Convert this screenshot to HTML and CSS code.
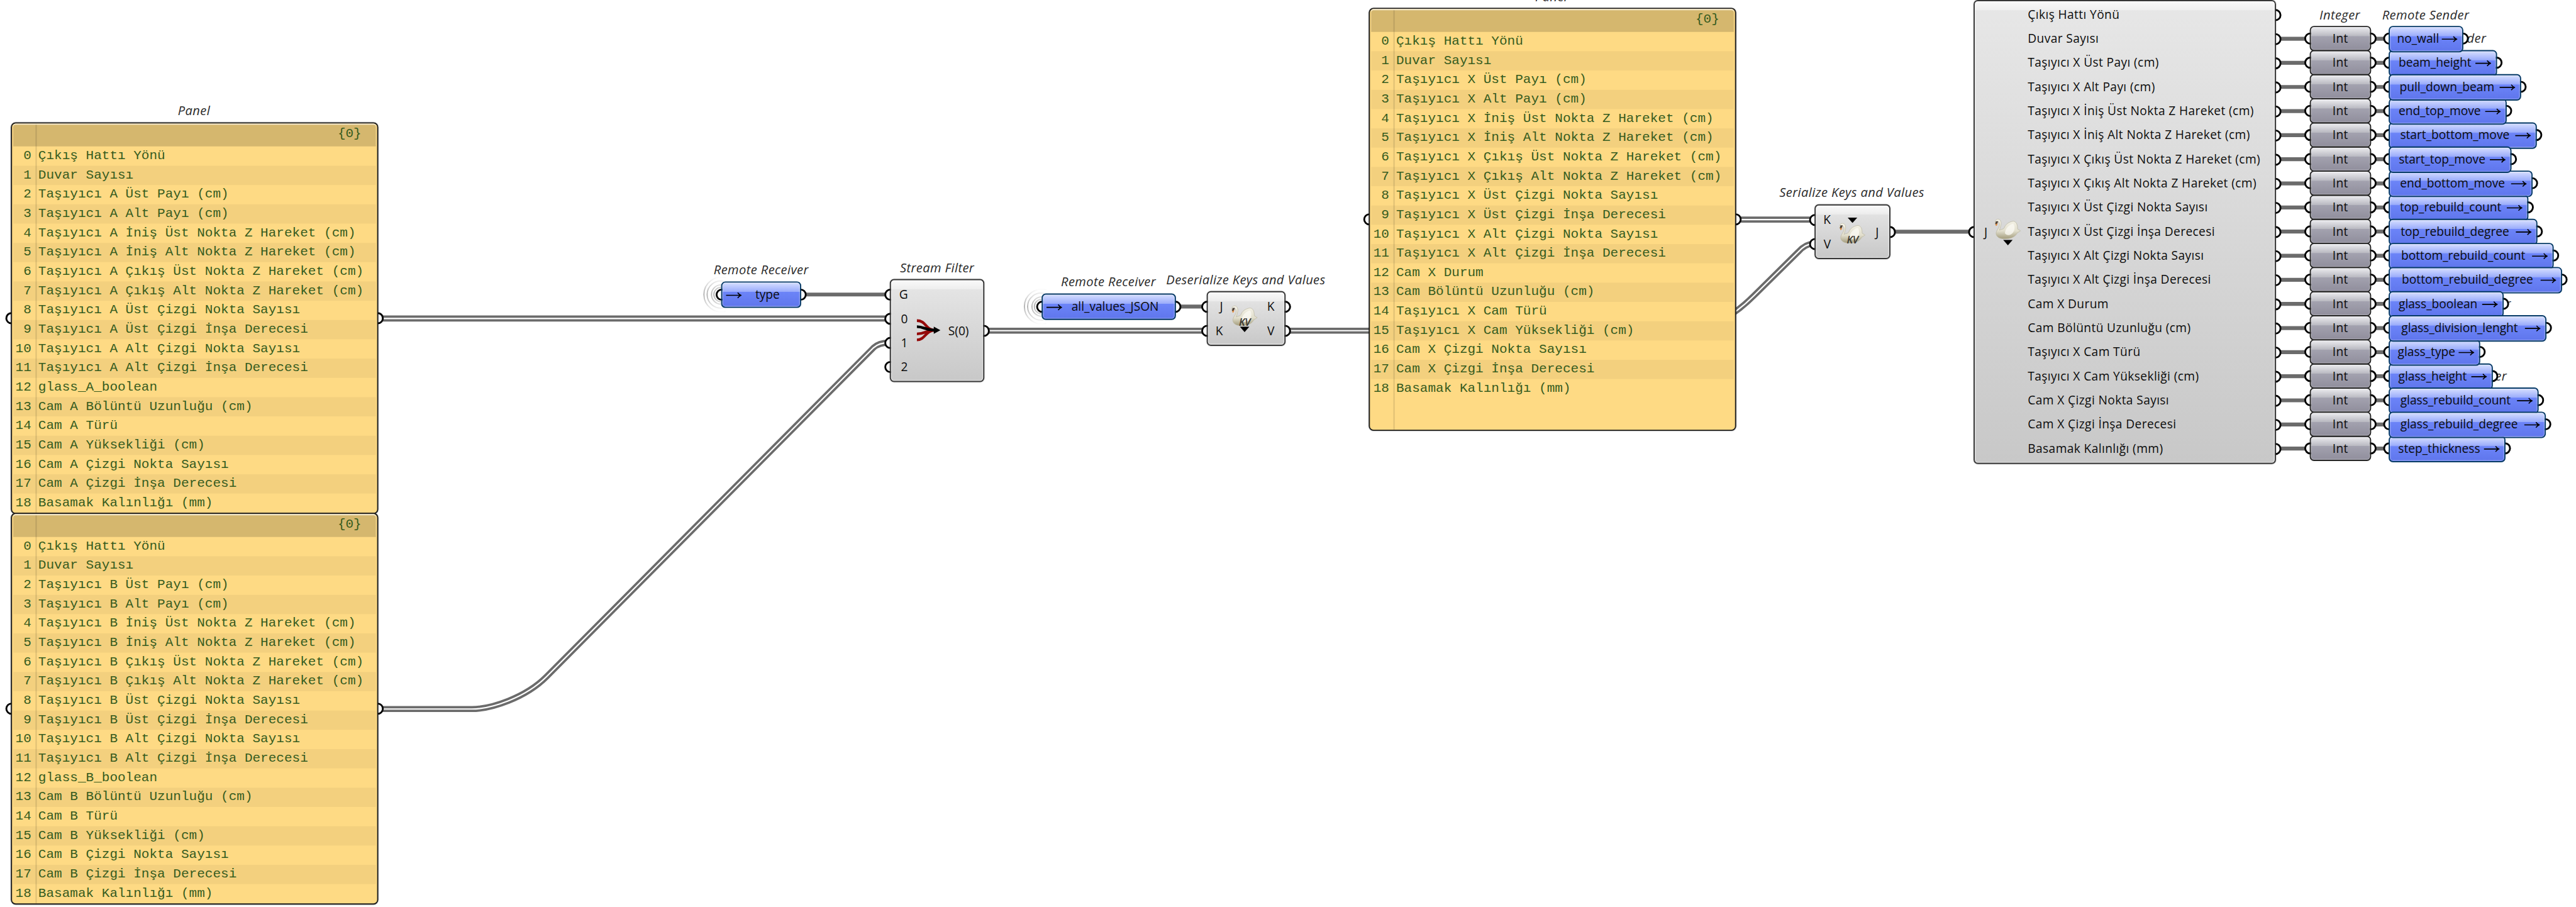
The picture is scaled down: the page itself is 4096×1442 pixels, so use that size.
FILE: index.html
```html
<!DOCTYPE html>
<html lang="tr">
<head>
<meta charset="utf-8">
<title>Node canvas</title>
<link rel="stylesheet" href="styles.css">
</head>
<body>
<main class="canvas">

<svg class="wires" width="4276" height="1505" viewBox="0 0 4276 1505">
  <defs>
    <linearGradient id="fade" gradientUnits="userSpaceOnUse" x1="0" y1="-30" x2="0" y2="30">
      <stop offset="0" stop-color="#999" stop-opacity="0"/>
      <stop offset=".5" stop-color="#999" stop-opacity=".75"/>
      <stop offset="1" stop-color="#999" stop-opacity="0"/>
    </linearGradient>
    <linearGradient id="feather" x1="0" y1="0" x2="0" y2="1">
      <stop offset="0" stop-color="#f6f4ea"/>
      <stop offset=".6" stop-color="#e2dfce"/>
      <stop offset="1" stop-color="#a39c7c"/>
    </linearGradient>
    <g id="waves" fill="none" stroke="url(#fade)" stroke-width="2">
      <path d="M8 -28A29 29 0 1 0 8 28"/>
      <path d="M4 -22A22.500 22.500 0 1 0 4 22"/>
      <path d="M0 -16A16 16 0 1 0 0 16"/>
      <path d="M0 -12A12 12 0 1 0 0 12"/>
    </g>
    <symbol id="swan" viewBox="0 0 43 35">
      <path d="M3 27C1 22 5 18 7 14C9 10 8 5 5 5C3 5 3 7 3 10C1 10 0 7 1 4C2 0 8 -1 10 4C12 9 9 15 8 19C11 17 14 18 16 15C18 9 24 5 31 4C37 5 38 11 38 17L43 20L37 24C35 29 28 33 20 33C12 34 5 32 3 27Z" fill="url(#feather)" stroke="#b9b49c" stroke-width=".7"/>
      <path d="M17 24C18 15 24 10 31 8C35 14 33 22 27 26C23 28 19 27 17 24Z" fill="#faf9f2" opacity=".8"/>
      <path d="M1 7L5 6L4 11L2 12Z" fill="#e08a3c"/>
      <path d="M2 4L6 4L4 8L1 9Z" fill="#4a4038"/>
    </symbol>
  </defs>
  <use href="#waves" x="1197" y="488.700"/>
  <use href="#waves" x="1729" y="508.700"/>
  <g class="wire">
    <path d="M1332 488.700H1475M1954 508.700H2001M3140 384.500H3274"/>
    <path d="M3780 64.300H3964M3780 104.300H3964M3780 144.300H3964M3780 184.300H3964M3780 224.300H3964M3780 264.300H3964M3780 304.300H3964M3780 344.300H3964M3780 384.300H3964M3780 424.300H3964M3780 464.300H3964M3780 504.300H3964M3780 544.300H3964M3780 584.300H3964M3780 624.300H3964M3780 664.300H3964M3780 704.300H3964M3780 744.300H3964"/>
  </g>
  <g class="wire-list">
    <path d="M630 528.500H1475M630 1176.500H783C815 1176.500 872 1158 907 1123L1450 577Q1459 568.700 1475 568.700M1636 548.700H2001M2136 548.700H2790C2835 548.700 2875 527 2911 491L2985 418Q2997 404.500 3010 404.500M2884 364.400H3010"/>
  </g>
  <g class="wire-core">
    <path d="M630 528.500H1475M630 1176.500H783C815 1176.500 872 1158 907 1123L1450 577Q1459 568.700 1475 568.700M1636 548.700H2001M2136 548.700H2790C2835 548.700 2875 527 2911 491L2985 418Q2997 404.500 3010 404.500M2884 364.400H3010"/>
  </g>
</svg>

<div class="label l-panel-a">Panel</div>
<section class="node panel panel-a">
  <i class="port in"></i><i class="port out"></i>
  <div class="sheet">
    <header>{0}</header>
    <ol>
      <li><b>0</b><span>Çıkış Hattı Yönü</span></li>
      <li><b>1</b><span>Duvar Sayısı</span></li>
      <li><b>2</b><span>Taşıyıcı A Üst Payı (cm)</span></li>
      <li><b>3</b><span>Taşıyıcı A Alt Payı (cm)</span></li>
      <li><b>4</b><span>Taşıyıcı A İniş Üst Nokta Z Hareket (cm)</span></li>
      <li><b>5</b><span>Taşıyıcı A İniş Alt Nokta Z Hareket (cm)</span></li>
      <li><b>6</b><span>Taşıyıcı A Çıkış Üst Nokta Z Hareket (cm)</span></li>
      <li><b>7</b><span>Taşıyıcı A Çıkış Alt Nokta Z Hareket (cm)</span></li>
      <li><b>8</b><span>Taşıyıcı A Üst Çizgi Nokta Sayısı</span></li>
      <li><b>9</b><span>Taşıyıcı A Üst Çizgi İnşa Derecesi</span></li>
      <li><b>10</b><span>Taşıyıcı A Alt Çizgi Nokta Sayısı</span></li>
      <li><b>11</b><span>Taşıyıcı A Alt Çizgi İnşa Derecesi</span></li>
      <li><b>12</b><span>glass_A_boolean</span></li>
      <li><b>13</b><span>Cam A Bölüntü Uzunluğu (cm)</span></li>
      <li><b>14</b><span>Cam A Türü</span></li>
      <li><b>15</b><span>Cam A Yüksekliği (cm)</span></li>
      <li><b>16</b><span>Cam A Çizgi Nokta Sayısı</span></li>
      <li><b>17</b><span>Cam A Çizgi İnşa Derecesi</span></li>
      <li><b>18</b><span>Basamak Kalınlığı (mm)</span></li>
    </ol>
  </div>
</section>

<section class="node panel panel-b">
  <i class="port in"></i><i class="port out"></i>
  <div class="sheet">
    <header>{0}</header>
    <ol>
      <li><b>0</b><span>Çıkış Hattı Yönü</span></li>
      <li><b>1</b><span>Duvar Sayısı</span></li>
      <li><b>2</b><span>Taşıyıcı B Üst Payı (cm)</span></li>
      <li><b>3</b><span>Taşıyıcı B Alt Payı (cm)</span></li>
      <li><b>4</b><span>Taşıyıcı B İniş Üst Nokta Z Hareket (cm)</span></li>
      <li><b>5</b><span>Taşıyıcı B İniş Alt Nokta Z Hareket (cm)</span></li>
      <li><b>6</b><span>Taşıyıcı B Çıkış Üst Nokta Z Hareket (cm)</span></li>
      <li><b>7</b><span>Taşıyıcı B Çıkış Alt Nokta Z Hareket (cm)</span></li>
      <li><b>8</b><span>Taşıyıcı B Üst Çizgi Nokta Sayısı</span></li>
      <li><b>9</b><span>Taşıyıcı B Üst Çizgi İnşa Derecesi</span></li>
      <li><b>10</b><span>Taşıyıcı B Alt Çizgi Nokta Sayısı</span></li>
      <li><b>11</b><span>Taşıyıcı B Alt Çizgi İnşa Derecesi</span></li>
      <li><b>12</b><span>glass_B_boolean</span></li>
      <li><b>13</b><span>Cam B Bölüntü Uzunluğu (cm)</span></li>
      <li><b>14</b><span>Cam B Türü</span></li>
      <li><b>15</b><span>Cam B Yüksekliği (cm)</span></li>
      <li><b>16</b><span>Cam B Çizgi Nokta Sayısı</span></li>
      <li><b>17</b><span>Cam B Çizgi İnşa Derecesi</span></li>
      <li><b>18</b><span>Basamak Kalınlığı (mm)</span></li>
    </ol>
  </div>
</section>

<div class="label l-type">Remote Receiver</div>
<section class="node receiver r-type">
  <i class="port in"></i><i class="port out"></i>
  <div class="pill"><svg class="arrow" viewBox="0 0 26 12"><use href="#arrow"/></svg><span>type</span></div>
</section>

<div class="label l-filter">Stream Filter</div>
<section class="node filter">
  <div class="shell">
    <div class="params">
      <p><i class="port in"></i>G</p><p><i class="port in"></i>0</p><p><i class="port in"></i>1</p><p><i class="port in"></i>2</p>
    </div>
    <svg class="merge" width="42" height="42" viewBox="0 0 42 42">
      <g fill="none" stroke-width="4.500">
        <path d="M2 4C18 4 16 20 32 20M2 26C16 26 18 20 30 20M2 36C16 36 16 20 32 20" stroke="#940a0a"/>
        <path d="M2 14C14 14 16 20 32 20" stroke="#000"/>
      </g>
      <path d="M30 14L41 20L30 26Z"/>
    </svg>
    <div class="params"><p><i class="port out"></i>S(0)</p></div>
  </div>
</section>

<div class="label l-json">Remote Receiver</div>
<section class="node receiver r-json">
  <i class="port in"></i><i class="port out"></i>
  <div class="pill"><svg class="arrow" viewBox="0 0 26 12"><use href="#arrow"/></svg><span>all_values_JSON</span></div>
</section>

<div class="label l-deser">Deserialize Keys and Values</div>
<section class="node kv deser">
  <div class="shell">
    <div class="params"><p><i class="port in"></i>J</p><p><i class="port in"></i>K</p></div>
    <div class="bird">
      <svg width="43" height="35"><use href="#swan"/></svg>
      <em>KV</em>
      <svg class="tri" width="16" height="9" viewBox="0 0 16 9"><path d="M0 0H16L8 9Z"/></svg>
    </div>
    <div class="params"><p><i class="port out"></i>K</p><p><i class="port out"></i>V</p></div>
  </div>
</section>

<div class="label l-panel-x">Panel</div>
<section class="node panel panel-x">
  <i class="port in"></i><i class="port out"></i>
  <div class="sheet">
    <header>{0}</header>
    <ol>
      <li><b>0</b><span>Çıkış Hattı Yönü</span></li>
      <li><b>1</b><span>Duvar Sayısı</span></li>
      <li><b>2</b><span>Taşıyıcı X Üst Payı (cm)</span></li>
      <li><b>3</b><span>Taşıyıcı X Alt Payı (cm)</span></li>
      <li><b>4</b><span>Taşıyıcı X İniş Üst Nokta Z Hareket (cm)</span></li>
      <li><b>5</b><span>Taşıyıcı X İniş Alt Nokta Z Hareket (cm)</span></li>
      <li><b>6</b><span>Taşıyıcı X Çıkış Üst Nokta Z Hareket (cm)</span></li>
      <li><b>7</b><span>Taşıyıcı X Çıkış Alt Nokta Z Hareket (cm)</span></li>
      <li><b>8</b><span>Taşıyıcı X Üst Çizgi Nokta Sayısı</span></li>
      <li><b>9</b><span>Taşıyıcı X Üst Çizgi İnşa Derecesi</span></li>
      <li><b>10</b><span>Taşıyıcı X Alt Çizgi Nokta Sayısı</span></li>
      <li><b>11</b><span>Taşıyıcı X Alt Çizgi İnşa Derecesi</span></li>
      <li><b>12</b><span>Cam X Durum</span></li>
      <li><b>13</b><span>Cam Bölüntü Uzunluğu (cm)</span></li>
      <li><b>14</b><span>Taşıyıcı X Cam Türü</span></li>
      <li><b>15</b><span>Taşıyıcı X Cam Yüksekliği (cm)</span></li>
      <li><b>16</b><span>Cam X Çizgi Nokta Sayısı</span></li>
      <li><b>17</b><span>Cam X Çizgi İnşa Derecesi</span></li>
      <li><b>18</b><span>Basamak Kalınlığı (mm)</span></li>
    </ol>
  </div>
</section>

<div class="label l-ser">Serialize Keys and Values</div>
<section class="node kv ser">
  <div class="shell">
    <div class="params"><p><i class="port in"></i>K</p><p><i class="port in"></i>V</p></div>
    <div class="bird">
      <svg class="tri" width="16" height="9" viewBox="0 0 16 9"><path d="M0 0H16L8 9Z"/></svg>
      <svg width="43" height="35"><use href="#swan"/></svg>
      <em>KV</em>
    </div>
    <div class="params"><p><i class="port out"></i>J</p></div>
  </div>
</section>

<section class="node parser">
  <div class="shell">
    <div class="params"><p><i class="port in"></i>J</p></div>
    <div class="bird">
      <svg width="43" height="35"><use href="#swan"/></svg>
      <svg class="tri" width="16" height="9" viewBox="0 0 16 9"><path d="M0 0H16L8 9Z"/></svg>
    </div>
    <div class="params fields">
      <p>Çıkış Hattı Yönü<i class="port out"></i></p>
      <p>Duvar Sayısı<i class="port out"></i></p>
      <p>Taşıyıcı X Üst Payı (cm)<i class="port out"></i></p>
      <p>Taşıyıcı X Alt Payı (cm)<i class="port out"></i></p>
      <p>Taşıyıcı X İniş Üst Nokta Z Hareket (cm)<i class="port out"></i></p>
      <p>Taşıyıcı X İniş Alt Nokta Z Hareket (cm)<i class="port out"></i></p>
      <p>Taşıyıcı X Çıkış Üst Nokta Z Hareket (cm)<i class="port out"></i></p>
      <p>Taşıyıcı X Çıkış Alt Nokta Z Hareket (cm)<i class="port out"></i></p>
      <p>Taşıyıcı X Üst Çizgi Nokta Sayısı<i class="port out"></i></p>
      <p>Taşıyıcı X Üst Çizgi İnşa Derecesi<i class="port out"></i></p>
      <p>Taşıyıcı X Alt Çizgi Nokta Sayısı<i class="port out"></i></p>
      <p>Taşıyıcı X Alt Çizgi İnşa Derecesi<i class="port out"></i></p>
      <p>Cam X Durum<i class="port out"></i></p>
      <p>Cam Bölüntü Uzunluğu (cm)<i class="port out"></i></p>
      <p>Taşıyıcı X Cam Türü<i class="port out"></i></p>
      <p>Taşıyıcı X Cam Yüksekliği (cm)<i class="port out"></i></p>
      <p>Cam X Çizgi Nokta Sayısı<i class="port out"></i></p>
      <p>Cam X Çizgi İnşa Derecesi<i class="port out"></i></p>
      <p>Basamak Kalınlığı (mm)<i class="port out"></i></p>
    </div>
  </div>
</section>

<div class="label l-int">Integer</div>
<div class="label l-s1">Remote Sender</div>
<div class="label l-s2">Remote Sender</div>
<div class="label l-s3">Remote Sender</div>
<div class="label l-s4">Remote Sender</div>

<svg class="defs" width="0" height="0"><symbol id="arrow" viewBox="0 0 26 12"><path d="M0 6H25M19.500 1.500Q22 5 25 6Q22 7 19.500 10.500" fill="none" stroke="#000" stroke-width="1.700"/></symbol></svg>

<section class="node outputs">
  <div class="row"><div class="int"><i class="port in"></i><i class="port out"></i><span>Int</span></div><div class="sender z3" style="width:124.7px"><i class="port in"></i><i class="port out"></i><div class="pill"><span>no_wall</span><svg class="arrow"><use href="#arrow"/></svg></div></div></div>
  <div class="row"><div class="int"><i class="port in"></i><i class="port out"></i><span>Int</span></div><div class="sender z1" style="width:180.7px"><i class="port in"></i><i class="port out"></i><div class="pill"><span>beam_height</span><svg class="arrow"><use href="#arrow"/></svg></div></div></div>
  <div class="row"><div class="int"><i class="port in"></i><i class="port out"></i><span>Int</span></div><div class="sender z5" style="width:220.7px"><i class="port in"></i><i class="port out"></i><div class="pill"><span>pull_down_beam</span><svg class="arrow"><use href="#arrow"/></svg></div></div></div>
  <div class="row"><div class="int"><i class="port in"></i><i class="port out"></i><span>Int</span></div><div class="sender z4" style="width:196.4px"><i class="port in"></i><i class="port out"></i><div class="pill"><span>end_top_move</span><svg class="arrow"><use href="#arrow"/></svg></div></div></div>
  <div class="row"><div class="int"><i class="port in"></i><i class="port out"></i><span>Int</span></div><div class="sender z3" style="width:246.7px"><i class="port in"></i><i class="port out"></i><div class="pill"><span>start_bottom_move</span><svg class="arrow"><use href="#arrow"/></svg></div></div></div>
  <div class="row"><div class="int"><i class="port in"></i><i class="port out"></i><span>Int</span></div><div class="sender z5" style="width:204.4px"><i class="port in"></i><i class="port out"></i><div class="pill"><span>start_top_move</span><svg class="arrow"><use href="#arrow"/></svg></div></div></div>
  <div class="row"><div class="int"><i class="port in"></i><i class="port out"></i><span>Int</span></div><div class="sender z4" style="width:239px"><i class="port in"></i><i class="port out"></i><div class="pill"><span>end_bottom_move</span><svg class="arrow"><use href="#arrow"/></svg></div></div></div>
  <div class="row"><div class="int"><i class="port in"></i><i class="port out"></i><span>Int</span></div><div class="sender z3" style="width:232.7px"><i class="port in"></i><i class="port out"></i><div class="pill"><span>top_rebuild_count</span><svg class="arrow"><use href="#arrow"/></svg></div></div></div>
  <div class="row"><div class="int"><i class="port in"></i><i class="port out"></i><span>Int</span></div><div class="sender z4" style="width:247px"><i class="port in"></i><i class="port out"></i><div class="pill"><span>top_rebuild_degree</span><svg class="arrow"><use href="#arrow"/></svg></div></div></div>
  <div class="row"><div class="int"><i class="port in"></i><i class="port out"></i><span>Int</span></div><div class="sender z5" style="width:274.7px"><i class="port in"></i><i class="port out"></i><div class="pill"><span>bottom_rebuild_count</span><svg class="arrow"><use href="#arrow"/></svg></div></div></div>
  <div class="row"><div class="int"><i class="port in"></i><i class="port out"></i><span>Int</span></div><div class="sender z6" style="width:288.7px"><i class="port in"></i><i class="port out"></i><div class="pill"><span>bottom_rebuild_degree</span><svg class="arrow"><use href="#arrow"/></svg></div></div></div>
  <div class="row"><div class="int"><i class="port in"></i><i class="port out"></i><span>Int</span></div><div class="sender z7" style="width:191px"><i class="port in"></i><i class="port out"></i><div class="pill"><span>glass_boolean</span><svg class="arrow"><use href="#arrow"/></svg></div></div></div>
  <div class="row"><div class="int"><i class="port in"></i><i class="port out"></i><span>Int</span></div><div class="sender z8" style="width:262.7px"><i class="port in"></i><i class="port out"></i><div class="pill"><span>glass_division_lenght</span><svg class="arrow"><use href="#arrow"/></svg></div></div></div>
  <div class="row"><div class="int"><i class="port in"></i><i class="port out"></i><span>Int</span></div><div class="sender z7" style="width:152.7px"><i class="port in"></i><i class="port out"></i><div class="pill"><span>glass_type</span><svg class="arrow"><use href="#arrow"/></svg></div></div></div>
  <div class="row"><div class="int"><i class="port in"></i><i class="port out"></i><span>Int</span></div><div class="sender z6" style="width:173px"><i class="port in"></i><i class="port out"></i><div class="pill"><span>glass_height</span><svg class="arrow"><use href="#arrow"/></svg></div></div></div>
  <div class="row"><div class="int"><i class="port in"></i><i class="port out"></i><span>Int</span></div><div class="sender z7" style="width:249px"><i class="port in"></i><i class="port out"></i><div class="pill"><span>glass_rebuild_count</span><svg class="arrow"><use href="#arrow"/></svg></div></div></div>
  <div class="row"><div class="int"><i class="port in"></i><i class="port out"></i><span>Int</span></div><div class="sender z8" style="width:261px"><i class="port in"></i><i class="port out"></i><div class="pill"><span>glass_rebuild_degree</span><svg class="arrow"><use href="#arrow"/></svg></div></div></div>
  <div class="row"><div class="int"><i class="port in"></i><i class="port out"></i><span>Int</span></div><div class="sender z7" style="width:194.7px"><i class="port in"></i><i class="port out"></i><div class="pill"><span>step_thickness</span><svg class="arrow"><use href="#arrow"/></svg></div></div></div>
</section>

</main>
</body>
</html>
```
FILE: styles.css
```css
* { box-sizing: border-box; }
html, body { margin: 0; padding: 0; background: #fff; }
body { width: 4096px; height: 1442px; overflow: hidden; }
ol, p { margin: 0; padding: 0; list-style: none; }
b, i, em { font-weight: inherit; font-style: inherit; }

.canvas {
  position: relative;
  width: 4276px;
  height: 1505px;
  overflow: hidden;
  background: #fff;
  transform: scale(.957905, .95814);
  transform-origin: 0 0;
  font: 20px/24px "Open Sans", "Noto Sans", sans-serif;
  color: #0c0c0c;
}

/* wires */
.wires { position: absolute; left: 0; top: 0; z-index: -2; }
.defs { position: absolute; }
.wire path { fill: none; stroke: #6b6b6b; stroke-width: 6.5; }
.wire-list path { fill: none; stroke: #6b6b6b; stroke-width: 10; }
.wire-core path { fill: none; stroke: #fff; stroke-width: 2.3; }

/* node placement on the canvas */
.node { position: absolute; }
.panel-a { left: 18px; top: 203px; height: 650px; }
.panel-b { left: 18px; top: 851px; height: 650px; }
.panel-x { left: 2272px; top: 13px; height: 702px; }
.r-type { left: 1197px; top: 467px; width: 133px; }
.r-json { left: 1729px; top: 487px; width: 223px; }
.filter { left: 1477px; top: 463px; width: 157px; height: 171px; }
.deser { left: 2003px; top: 483px; width: 131px; height: 91px; }
.ser { left: 3012px; top: 339px; width: 126px; height: 91px; }
.parser { left: 3276px; top: 0; width: 502px; height: 770px; }
.outputs { left: 3834px; top: 43.300px; }

/* italic captions above the nodes */
.label {
  position: absolute;
  z-index: -3;
  transform: translateX(-50%);
  white-space: nowrap;
  font-size: 21px;
  font-style: italic;
  letter-spacing: .4px;
  color: #2a2a2a;
}
.l-panel-a { left: 322px; top: 171px; }
.l-panel-x { left: 2575px; top: -18px; }
.l-type { left: 1263.500px; top: 435px; }
.l-filter { left: 1555.500px; top: 432px; }
.l-json { left: 1840px; top: 455px; }
.l-deser { left: 2068px; top: 452px; }
.l-ser { left: 3074px; top: 307px; }
.l-int { left: 3884px; top: 12px; }
.l-s1 { left: 4026.500px; top: 12px; }
.l-s2 { left: 4054.700px; top: 51px; }
.l-s3 { left: 4095.600px; top: 491px; }
.l-s4 { left: 4088.800px; top: 611px; }

/* connection grips */
.port {
  position: absolute;
  z-index: -1;
  top: 50%;
  width: 20px;
  height: 20px;
  margin-top: -10px;
  border: 3.500px solid #000;
  border-radius: 50%;
  background: #fff;
}
.port.in { left: -9px; }
.port.out { right: -9px; }

/* yellow panels */
.panel { width: 610px; }
.panel-x .port { top: 351px; }
.sheet {
  height: 100%;
  padding: 2px;
  border: 2px solid #1c1c1c;
  border-radius: 8px;
  box-shadow: 0 0 0 1px rgba(0, 0, 0, .15);
  background:
    linear-gradient(rgba(0, 0, 0, .13), rgba(0, 0, 0, .13)) 38.500px 0 / 2px 100% no-repeat,
    #feda84;
  font: 22px/32px "Liberation Mono", monospace;
  letter-spacing: -.03px;
  color: #365c1e;
}
.sheet header {
  height: 35.500px;
  padding: 4px 24px 0 0;
  border-radius: 4px 4px 0 0;
  line-height: 24px;
  text-align: right;
  background: rgba(0, 0, 0, .16);
  box-shadow: 0 -2px 0 #f6ecd2;
}
.sheet li { display: flex; height: 32px; line-height: 31px; }
.sheet li:nth-child(even) { background: rgba(0, 0, 0, .045); }
.sheet b { width: 30px; margin-right: 11.500px; text-align: right; }
.sheet li, .sheet header { white-space: pre; }

/* grey components */
.shell {
  display: flex;
  align-items: center;
  height: 100%;
  border: 2px solid #363636;
  border-radius: 7px;
  box-shadow: inset 0 0 0 1.500px rgba(255, 255, 255, .45), 0 0 0 1px rgba(0, 0, 0, .12);
  background:
    linear-gradient(rgba(255, 255, 255, .75), rgba(255, 255, 255, .35)) 0 0 / 100% 15px no-repeat,
    linear-gradient(#e7e7e7, #c8c8c8);
}
.params p { height: 40px; line-height: 40px; white-space: nowrap; }
.node .params p { position: relative; }

.filter .shell > .params:first-child { width: 28px; text-align: right; }
.filter .merge { margin: 0 12px 0 13px; flex: none; }
.filter .params .in { left: -11px; }
.filter .params:last-child { flex: 1; }
.filter .params .out { right: -11px; }

.kv .params:first-child { width: 25px; text-align: right; }
.kv .params:last-child { flex: 1; text-align: center; }
.kv .params .in { left: -11px; }
.kv .params .out { right: -11px; }
.bird { position: relative; display: flex; flex-direction: column; align-items: center; flex: none; width: 43px; }
.kv .bird { margin-left: 14px; }
.bird svg { display: block; }
.bird em {
  position: absolute;
  left: 10px;
  width: 24px;
  font-size: 17px;
  line-height: 17px;
  font-weight: 600;
  font-style: italic;
  letter-spacing: -.500px;
  color: #3a3832;
  text-align: center;
}
.deser em { top: 19px; }
.ser em { bottom: -1px; }
.ser .bird { margin-top: -4px; }

.parser .params:first-child { width: 21px; text-align: right; }
.parser .params:first-child .in { left: -11px; }
.parser .bird { margin: 0 12px 0 12px; }
.parser .fields { flex: 1; letter-spacing: .4px; }
.parser .fields p { line-height: 38px; }
.parser .fields .out { right: -11px; }

/* blue remote pills */
.receiver { height: 44px; }
.pill {
  display: flex;
  align-items: center;
  height: 100%;
  border: 2px solid #063a66;
  border-radius: 7px;
  box-shadow: inset 0 0 0 1.500px rgba(255, 255, 255, .25);
  background: linear-gradient(#d6deff, #9aacfb 37%, #6c84f8 38%, #5f76ec);
  white-space: nowrap;
}
.pill span { flex: 1; text-align: center; }
.arrow { flex: none; width: 26px; height: 12px; }
.receiver .pill { padding: 0 11px 0 6px; }
.receiver .arrow { margin-top: 2px; }

/* integer converters and senders */
.row { display: flex; align-items: flex-start; gap: 29px; height: 40px; }
.int {
  position: relative;
  width: 101.500px;
  height: 42px;
}
.int span {
  display: block;
  height: 100%;
  border: 2px solid #262626;
  border-radius: 7px;
  box-shadow: inset 0 0 0 1.500px rgba(255, 255, 255, .2);
  background: linear-gradient(#ececef, #b9b9c1 39%, #a3a2af 40%, #908e9c);
  line-height: 38px;
  text-align: center;
  letter-spacing: .4px;
}
.sender { position: relative; height: 44px; }
.sender .port { top: 21px; }
.sender .pill { padding: 0 8px 3px 8px; }
.sender .arrow { margin-top: 2px; }
.z1 { z-index: 1; } .z3 { z-index: 3; } .z4 { z-index: 4; } .z5 { z-index: 5; }
.z6 { z-index: 6; } .z7 { z-index: 7; } .z8 { z-index: 8; }
```
